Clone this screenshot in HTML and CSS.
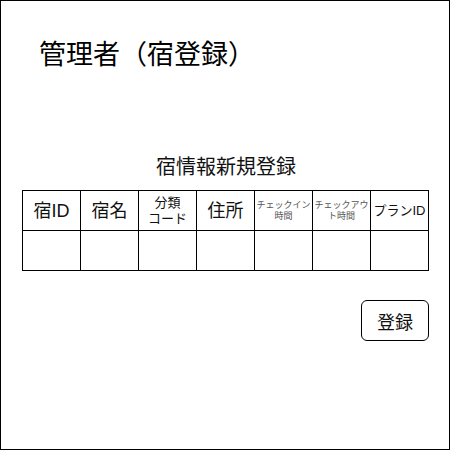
FILE: index.html
```html
<!DOCTYPE html>
<html lang="ja">
<head>
<meta charset="utf-8">
<link rel="stylesheet" href="styles.css">
</head>
<body>
<div class="frame">
  <h1 class="title">管理者（宿登録）</h1>
  <div class="section">
    <div class="subtitle">宿情報新規登録</div>
    <table class="grid">
      <tr class="head">
        <td class="lg">宿ID</td>
        <td class="lg">宿名</td>
        <td class="md">分類<br>コード</td>
        <td class="lg">住所</td>
        <td class="xs">チェックイン<br>時間</td>
        <td class="xs">チェックアウ<br>ト時間</td>
        <td class="sm">プランID</td>
      </tr>
      <tr class="body">
        <td></td><td></td><td></td><td></td><td></td><td></td><td></td>
      </tr>
    </table>
    <div class="actions">
      <button class="btn">登録</button>
    </div>
  </div>
</div>
</body>
</html>
```
FILE: styles.css
```css
html, body {
  margin: 0;
  padding: 0;
  background: #fff;
}
body {
  font-family: "Liberation Sans", "Noto Sans CJK JP", sans-serif;
  color: #000;
}
.frame {
  width: 450px;
  height: 450px;
  box-sizing: border-box;
  border: 1px solid #000;
  padding: 0 21px;
}
.title {
  margin: 0;
  padding: 37px 0 0 17px;
  font-size: 27px;
  font-weight: normal;
  line-height: 35px;
}
.section {
  margin-top: 80px;
}
.subtitle {
  text-align: center;
  font-size: 20px;
  line-height: 28px;
  padding-left: 2px;
  color: #111;
}
.grid {
  margin-top: 9px;
  border-collapse: collapse;
  table-layout: fixed;
  width: 407px;
}
.grid td {
  border: 1px solid #000;
  padding: 0;
  text-align: center;
  vertical-align: middle;
  overflow: visible;
  white-space: nowrap;
}
.grid .head td { height: 39px; }
.grid .body td { height: 39px; }
.lg { font-size: 18px; line-height: 22px; color: #111; }
.md { font-size: 13px; line-height: 16px; color: #111; }
.sm { font-size: 13px; line-height: 16px; color: #111; }
.xs { font-size: 9px; line-height: 11px; color: #555; }
.actions {
  display: flex;
  justify-content: flex-end;
  margin-top: 29px;
}
.btn {
  width: 68px;
  height: 41px;
  border: 1px solid #000;
  border-radius: 6px;
  background: #fff;
  font-family: "Liberation Sans", "Noto Sans CJK JP", sans-serif;
  font-size: 18px;
  color: #111;
  padding: 0;
  margin-right: -1px;
}
```
